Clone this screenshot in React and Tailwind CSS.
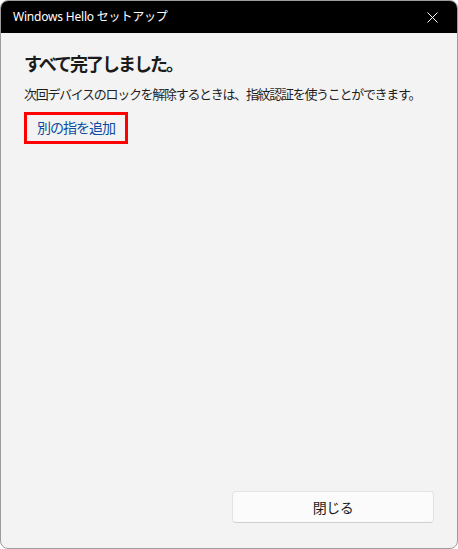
import React from 'react';

const jp = { fontFamily: '"Noto Sans", "Noto Sans CJK JP", sans-serif' };

function CloseIcon() {
	return (
		<svg width="11" height="11" viewBox="0 0 11 11" fill="none">
			<path d="M0.5 0.5L10.5 10.5M10.5 0.5L0.5 10.5" stroke="#ffffff" strokeWidth="1" />
		</svg>
	);
}

export default function App() {
	return (
		<div className="w-[458px] h-[549px] bg-white" style={jp}>
			<div className="w-full h-full flex flex-col rounded-[8px] border border-[#9c9c9c] overflow-hidden bg-[#f3f3f3]">
				{/* title bar */}
				<div className="h-[32px] bg-black flex items-center justify-between pl-[12px] pr-[19px] shrink-0">
					<span className="text-white text-[12px] tracking-[-0.2px]">Windows Hello セットアップ</span>
					<CloseIcon />
				</div>

				{/* body */}
				<div className="flex-1 flex flex-col px-[23px] pt-[17px] pb-[25px]">
					<h1 className="text-[18px] leading-[28px] font-semibold text-[#1b1b1b] tracking-[-2px]">
						すべて完了しました。
					</h1>
					<p className="mt-[6px] text-[13px] leading-[20px] text-[#1f1f1f] tracking-[-1.3px]">
						次回デバイスのロックを解除するときは、指紋認証を使うことができます。
					</p>
					<div className="mt-[8px]">
						<button className="border-[3px] border-[#ff0000] h-[32px] px-[10px] text-[14px] text-[#0a4da2] tracking-[-1px] leading-none">
							別の指を追加
						</button>
					</div>

					<div className="mt-auto flex justify-end">
						<button className="w-[202px] h-[32px] bg-[#fbfbfb] border border-[#e3e3e3] border-b-[#cfcfcf] rounded-[4px] text-[14px] text-[#1b1b1b] tracking-[-0.5px]">
							閉じる
						</button>
					</div>
				</div>
			</div>
		</div>
	);
}
